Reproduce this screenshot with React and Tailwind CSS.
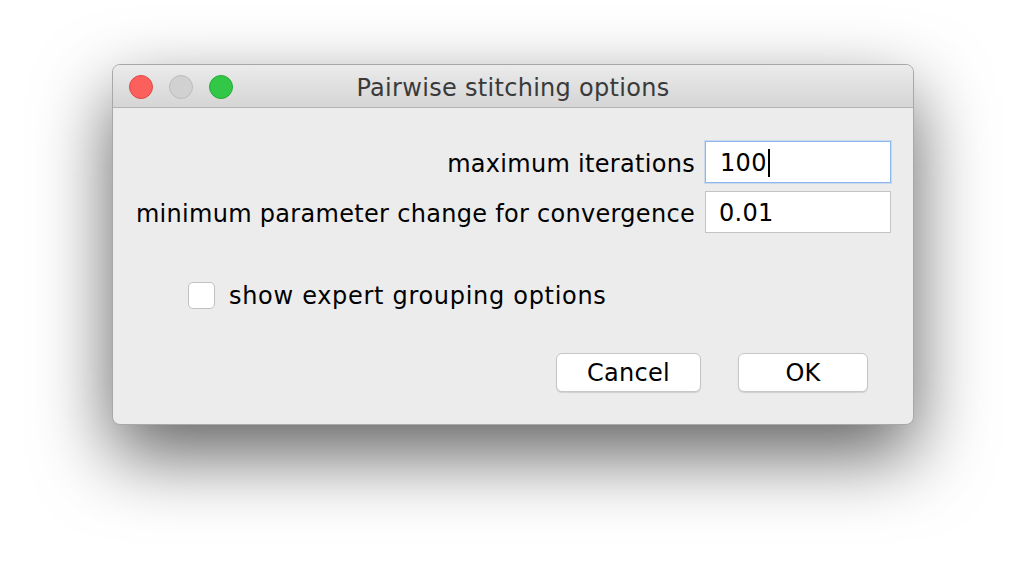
import React from 'react';

const font = { fontFamily: '"DejaVu Sans", "Noto Sans", sans-serif' };

const TrafficLight = ({ color, border }) => (
    <span className={`w-[24px] h-[24px] rounded-full border ${color} ${border}`}></span>
);

const App = () => {
    return (
        <div className="w-[1026px] h-[586px] bg-white pt-[64px] pl-[112px] overflow-hidden" style={font}>
            <div className="w-[802px] h-[361px] flex flex-col rounded-[8px] overflow-hidden bg-[#ececec] border border-[#a8a8a8] shadow-[0_30px_75px_rgba(0,0,0,0.62)]">
                {/* title bar */}
                <div className="relative h-[43px] shrink-0 flex items-center justify-center bg-gradient-to-b from-[#ebebeb] to-[#d5d5d5] border-b border-[#b4b4b4]">
                    <div className="absolute left-[16px] top-[10px] flex gap-[16px]">
                        <TrafficLight color="bg-[#fc605c]" border="border-[#de4a45]" />
                        <TrafficLight color="bg-[#d1d1d1]" border="border-[#bcbcbc]" />
                        <TrafficLight color="bg-[#33c748]" border="border-[#27a937]" />
                    </div>
                    <span className="text-[24px] leading-[30px] pt-[3px] text-[#3a3a3a] tracking-[0.3px]">Pairwise stitching options</span>
                </div>

                {/* body */}
                <div className="flex flex-col px-[22px] pt-[33px] text-[24px] tracking-[0.3px] text-black">
                    <div className="grid grid-cols-[1fr_186px] gap-x-[10px] gap-y-[8px] items-center">
                        <label className="text-right whitespace-nowrap pt-[3px]">maximum iterations</label>
                        <div className="h-[42px] bg-white border border-[#8cb7ec] shadow-[0_0_0_1px_rgba(140,183,236,0.35)] flex items-center pl-[14px] pt-[2px]">
                            100<span className="w-[2px] h-[28px] bg-black ml-[1px]"></span>
                        </div>
                        <label className="text-right whitespace-nowrap pt-[3px]">minimum parameter change for convergence</label>
                        <div className="h-[42px] bg-white border border-[#c3c3c3] flex items-center pl-[13px] pt-[2px]">
                            0.01
                        </div>
                    </div>

                    <div className="flex items-center gap-[14px] mt-[44px] ml-[53px] h-[36px]">
                        <span className="w-[27px] h-[27px] rounded-[5px] bg-white border border-[#c1c1c1]"></span>
                        <span className="tracking-[0.7px] pt-[2px]">show expert grouping options</span>
                    </div>

                    <div className="flex justify-end gap-[37px] mt-[40px] pr-[23px]">
                        <button className="w-[145px] h-[39px] rounded-[6px] bg-white border border-[#c6c6c6] shadow-[0_1px_1px_rgba(0,0,0,0.12)] pt-[1px]">Cancel</button>
                        <button className="w-[130px] h-[39px] rounded-[6px] bg-white border border-[#c6c6c6] shadow-[0_1px_1px_rgba(0,0,0,0.12)] pt-[1px]">OK</button>
                    </div>
                </div>
            </div>
        </div>
    );
};

export default App;
